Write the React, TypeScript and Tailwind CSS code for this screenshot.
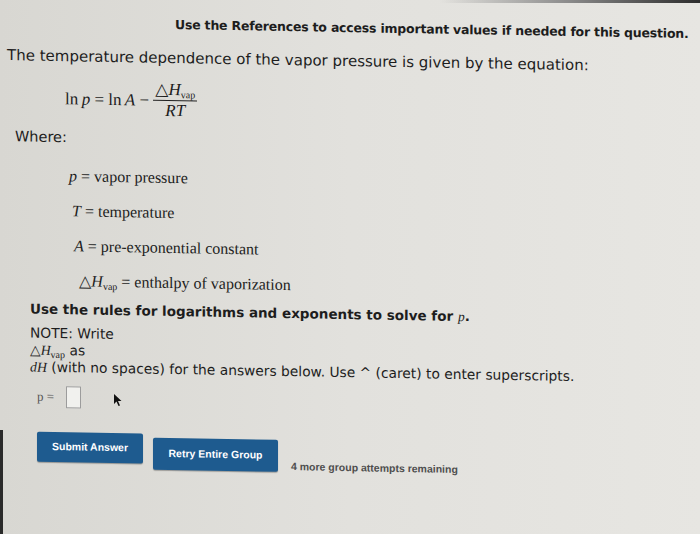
import React from 'react';

const sans = { fontFamily: '"DejaVu Sans", Verdana, sans-serif' };
const serif = { fontFamily: '"Liberation Serif", "DejaVu Serif", serif' };
const arial = { fontFamily: '"Liberation Sans", Arial, sans-serif' };

// ΔH with a "vap" subscript that does not push the line box
function Dh() {
  return (
    <span style={serif} className="whitespace-nowrap">
      <span className="not-italic">△</span>
      <i>H</i>
      <span className="relative top-[3px] inline-block text-[10px] leading-none">vap</span>
    </span>
  );
}

export default function App() {
  return (
    <div className="relative h-[534px] w-[700px] overflow-hidden bg-gradient-to-r from-[#d8d7d2] via-[#e2e1dd] to-[#e7e6e2] text-[#1d1d1d]" style={sans}>
      {/* monitor bezel edges seen in the photo */}
      <div className="absolute right-0 top-0 h-[3px] w-[260px] bg-gradient-to-r from-transparent via-[#8a8a8a] to-[#2e2e2e]" />
      <div className="absolute bottom-0 left-0 top-[430px] w-[3px] bg-[#2a2a2a]" />

      {/* slight slant of the photographed screen */}
      <div className="origin-top-left skew-y-1 pt-[14px]">
        <p className="whitespace-nowrap pl-[175px] text-[12.5px] font-bold leading-[16px] tracking-[-0.2px]">
          Use the References to access important values if needed for this question.
        </p>
        <p className="mt-[15px] whitespace-nowrap pl-[7px] text-[15px] leading-[20px]">
          The temperature dependence of the vapor pressure is given by the equation:
        </p>

        {/* equation */}
        <div className="mt-[12px] flex items-center pl-[65px] text-[17px]" style={serif}>
          <span>ln&thinsp;<i>p</i> = ln&thinsp;<i>A</i> &minus;&nbsp;</span>
          <span className="inline-flex flex-col items-center">
            <span className="px-[2px] leading-[20px]"><Dh /></span>
            <span className="h-px w-full bg-[#222]" />
            <span className="leading-[20px]"><i>RT</i></span>
          </span>
        </div>

        <p className="mt-[9px] pl-[15px] text-[14.5px] leading-[18px]">Where:</p>

        <div className="mt-[20px] flex flex-col gap-[15px] pl-[69px] text-[16px] leading-[20px]" style={serif}>
          <p><i>p</i> = vapor pressure</p>
          <p className="pl-[3px]"><i>T</i> = temperature</p>
          <p className="pl-[5px]"><i>A</i> = pre-exponential constant</p>
          <p className="pl-[10px]"><Dh /> = enthalpy of vaporization</p>
        </div>

        <div className="mt-[9px] pl-[30px]">
          <p className="whitespace-nowrap text-[13.5px] font-bold leading-[18px]">
            Use the rules for logarithms and exponents to solve for <i className="font-normal" style={serif}>p</i>.
          </p>
          <div className="mt-[6px] text-[13.8px] leading-[17px]">
            <p>NOTE: Write</p>
            <p><Dh /> as</p>
            <p className="whitespace-nowrap"><i style={serif}>dH</i> (with no spaces) for the answers below. Use ^ (caret) to enter superscripts.</p>
          </div>
          <div className="mt-[10px] flex items-center pl-[7px]">
            <span className="text-[13px] text-[#555]" style={serif}>p =</span>
            <span className="ml-[12px] h-[22px] w-[15px] border border-[#9c9c9c] bg-[#f1f1ee]" />
            <svg className="ml-[32px] mt-[4px]" width="10" height="14" viewBox="0 0 10 14">
              <path d="M1 1 L1 11 L3.5 8.5 L5.5 13 L7 12.3 L5 8 L8.5 8 Z" fill="#111" />
            </svg>
          </div>
        </div>

        <div className="mt-[24px] flex items-start pl-[37px]" style={arial}>
          <button className="h-[30px] w-[106px] rounded-[2px] bg-[#1e5b8f] text-[10.5px] font-bold text-white shadow-[0_1px_1px_rgba(0,0,0,0.3)]">
            Submit Answer
          </button>
          <button className="ml-[10px] mt-[4px] h-[32px] w-[125px] rounded-[2px] bg-[#1e5b8f] text-[10.5px] font-bold text-white shadow-[0_1px_1px_rgba(0,0,0,0.3)]">
            Retry Entire Group
          </button>
          <span className="ml-[13px] mt-[24px] text-[10.5px] font-bold leading-[12px] text-[#4e4e4e]">4 more group attempts remaining</span>
        </div>
      </div>
    </div>
  );
}
